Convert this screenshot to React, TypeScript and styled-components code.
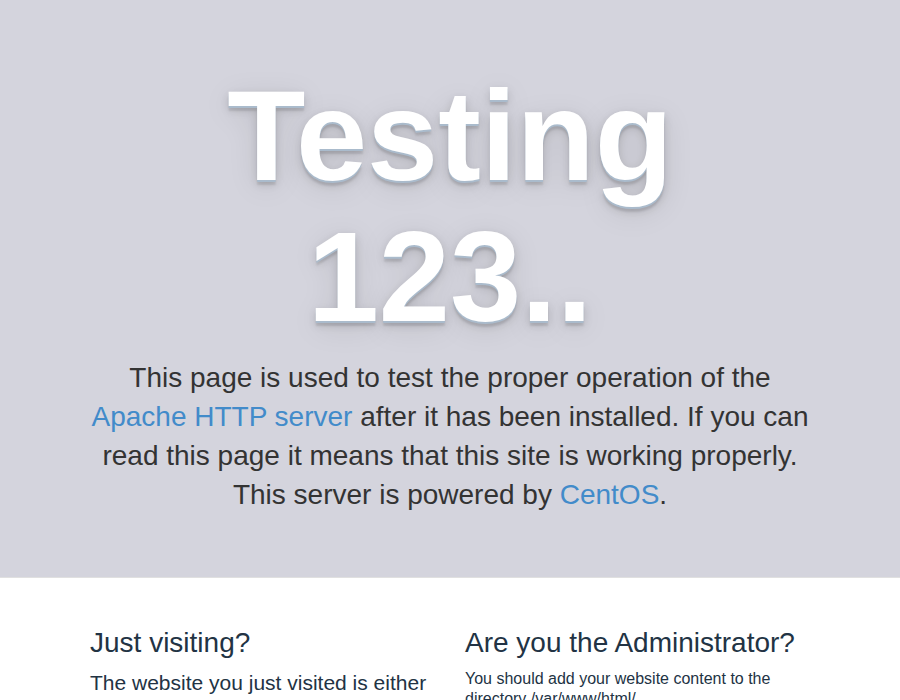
import React from "react";
import styled, { createGlobalStyle } from "styled-components";

const GlobalStyle = createGlobalStyle`
  * {
    box-sizing: border-box;
  }

  body {
    margin: 0;
    padding: 0;
    background: #ffffff;
    font-family: "Liberation Sans", Arial, Helvetica, sans-serif;
    font-size: 16px;
    line-height: 1.42857;
    color: #223344;
  }
`;

const Jumbotron = styled.section`
  background: rgb(212, 212, 221);
  color: #333333;
  text-align: center;
  padding: 46px 0 48px;
`;

const Container = styled.div`
  width: 750px;
  margin: 0 auto;
  padding: 0 15px;
`;

const Title = styled.h1`
  margin: 20px 0 10px;
  font-size: 128px;
  line-height: 1.1;
  font-weight: 700;
  color: #ffffff;
  text-shadow: 0px 2px 0px #aabbcc, 0px 4px 10px rgba(0, 0, 0, 0.15),
    0px 5px 2px rgba(0, 0, 0, 0.1), 0px 6px 30px rgba(0, 0, 0, 0.1);
`;

const Intro = styled.p`
  margin: 0 0 15px;
  font-size: 28px;
  line-height: 1.4;
  font-weight: 400;
`;

const Link = styled.a`
  color: #428bca;
  text-decoration: none;
`;

const Main = styled.section`
  background: #ffffff;
  color: #223344;
  border-top: 1px solid rgba(0, 0, 0, 0.12);
  padding: 30px 0 40px;
`;

const Row = styled.div`
  display: grid;
  grid-template-columns: 1fr 1fr;
  column-gap: 30px;
`;

const Column = styled.div``;

const Heading = styled.h2`
  margin: 20px 0 10px;
  font-size: 28px;
  line-height: 1.1;
  font-weight: 400;
`;

const Text = styled.p<{ $lead?: boolean }>`
  margin: 0 0 10px;
  font-size: ${({ $lead }) => ($lead ? "21px" : "16px")};
  line-height: ${({ $lead }) => ($lead ? 1.38 : 1.25)};
`;

const Path = styled.code`
  font-family: inherit;
`;

export default function App() {
  return (
    <>
      <GlobalStyle />
      <Jumbotron>
        <Container>
          <Title>Testing 123..</Title>
          <Intro>
            This page is used to test the proper operation of the{" "}
            <Link href="#">Apache HTTP server</Link> after it has been
            installed. If you can read this page it means that this site is
            working properly. This server is powered by{" "}
            <Link href="#">CentOS</Link>.
          </Intro>
        </Container>
      </Jumbotron>
      <Main>
        <Container>
          <Row>
            <Column>
              <Heading>Just visiting?</Heading>
              <Text $lead>
                The website you just visited is either experiencing problems
                or is undergoing routine maintenance.
              </Text>
              <Text>
                If you would like to let the administrators of this website
                know that you've seen this page instead of the page you
                expected, you should send them e-mail. In general, mail sent
                to the name "webmaster" and directed to the website's domain
                should reach the appropriate person.
              </Text>
            </Column>
            <Column>
              <Heading>Are you the Administrator?</Heading>
              <Text>
                You should add your website content to the directory{" "}
                <Path>/var/www/html/</Path>.
              </Text>
              <Text>
                To prevent this page from ever being used, follow the
                instructions in the file{" "}
                <Path>/etc/httpd/conf.d/welcome.conf</Path>.
              </Text>
            </Column>
          </Row>
        </Container>
      </Main>
    </>
  );
}
